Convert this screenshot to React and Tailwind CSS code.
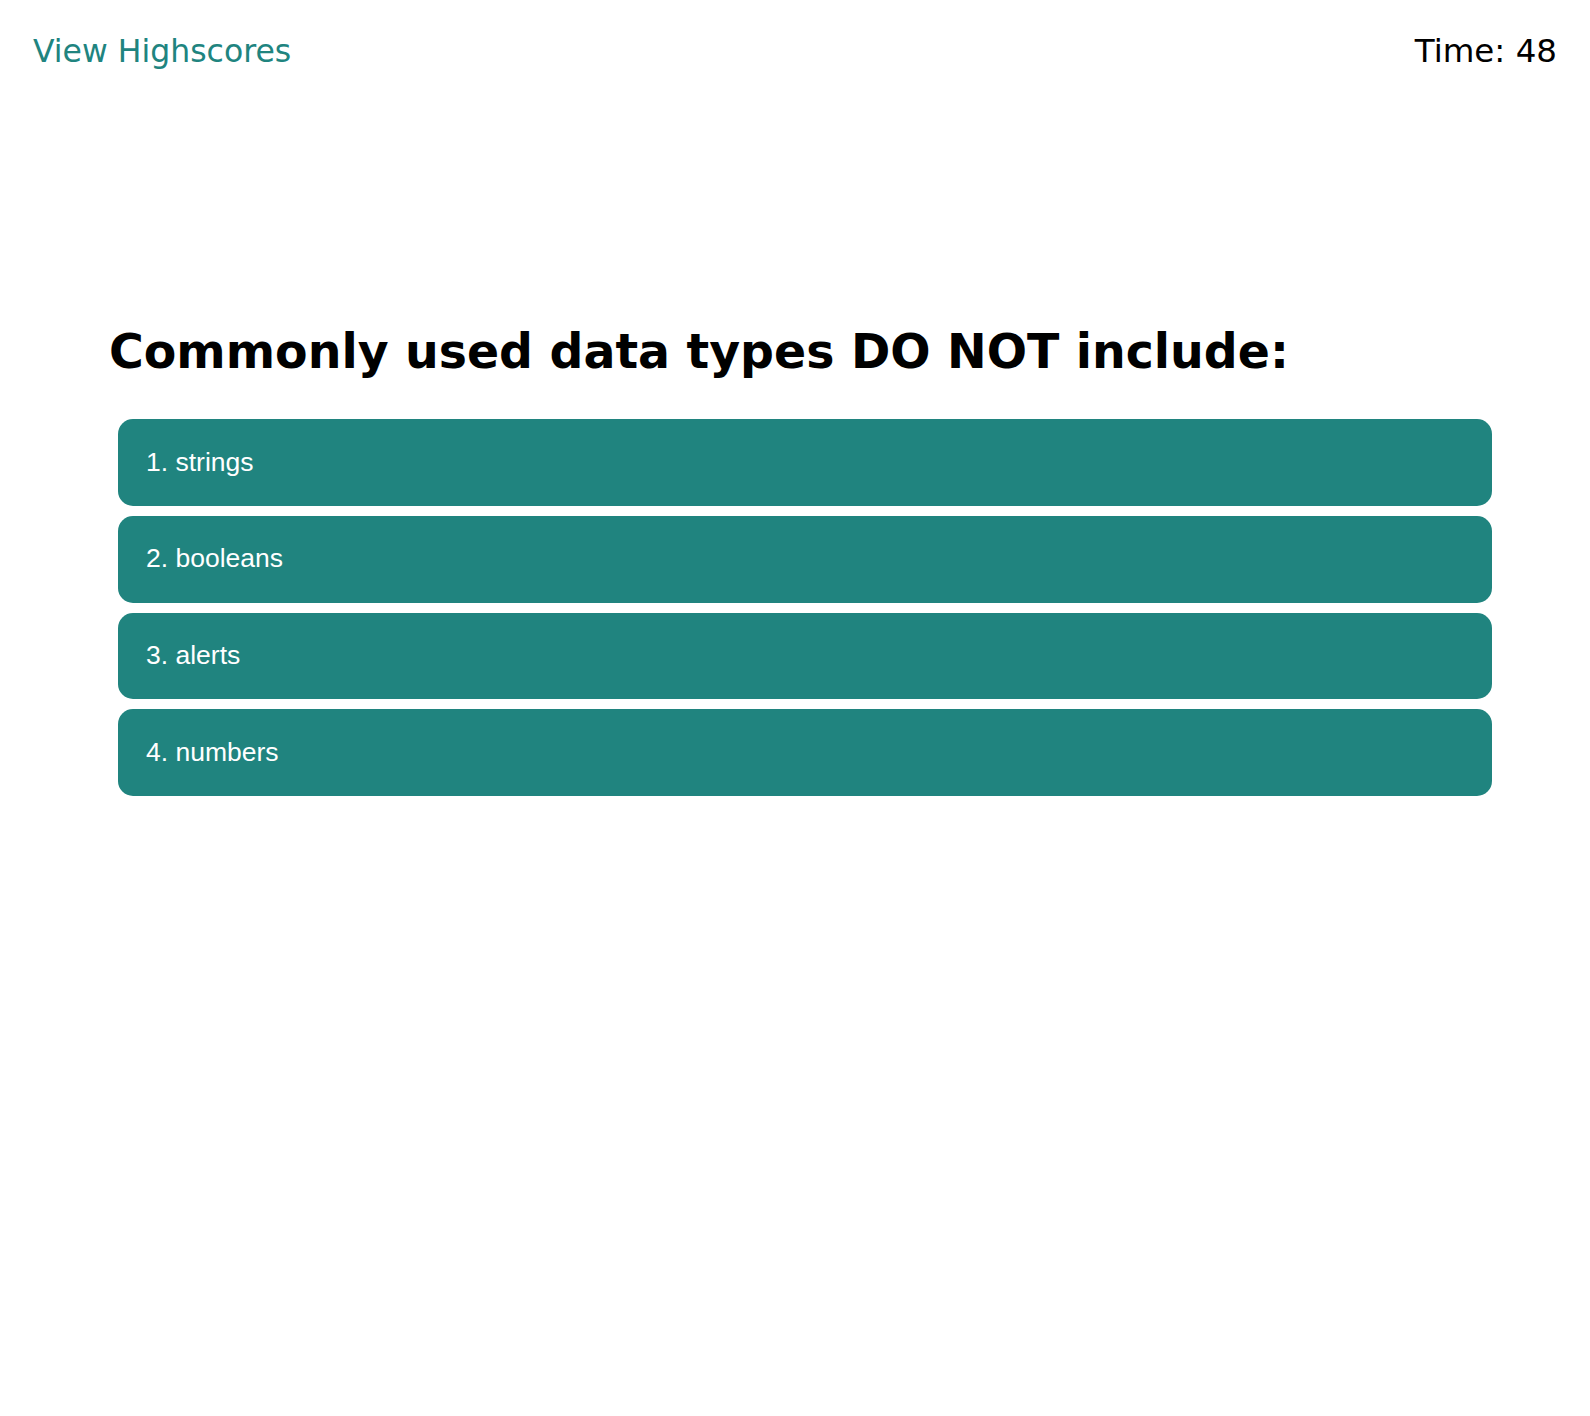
import React from 'react';

const choices = ['1. strings', '2. booleans', '3. alerts', '4. numbers'];

const App = () => {
  return (
    <div className="min-h-screen bg-white" style={{ fontFamily: '"DejaVu Sans", Verdana, sans-serif' }}>
      {/* Header */}
      <header className="flex justify-between items-baseline px-[33px] pt-[33px]">
        <a href="#" className="text-[31.5px] leading-[36px] text-[#20847f]">
          View Highscores
        </a>
        <div className="text-[32.5px] leading-[36px] text-black">Time: 48</div>
      </header>

      {/* Question */}
      <main className="pl-[109px] pr-[98px] pt-[255px]">
        <h1 className="text-[47.4px] leading-[56px] font-bold text-black">
          Commonly used data types DO NOT include:
        </h1>
        <div className="mt-[39px] ml-[9px] flex flex-col gap-[10px]">
          {choices.map((c) => (
            <button
              key={c}
              className="h-[86.75px] w-full rounded-[15px] bg-[#20847f] pl-[28px] text-left text-[26.5px] text-white"
              style={{ fontFamily: '"Liberation Sans", Arial, sans-serif' }}
            >
              {c}
            </button>
          ))}
        </div>
      </main>
    </div>
  );
};

export default App;
